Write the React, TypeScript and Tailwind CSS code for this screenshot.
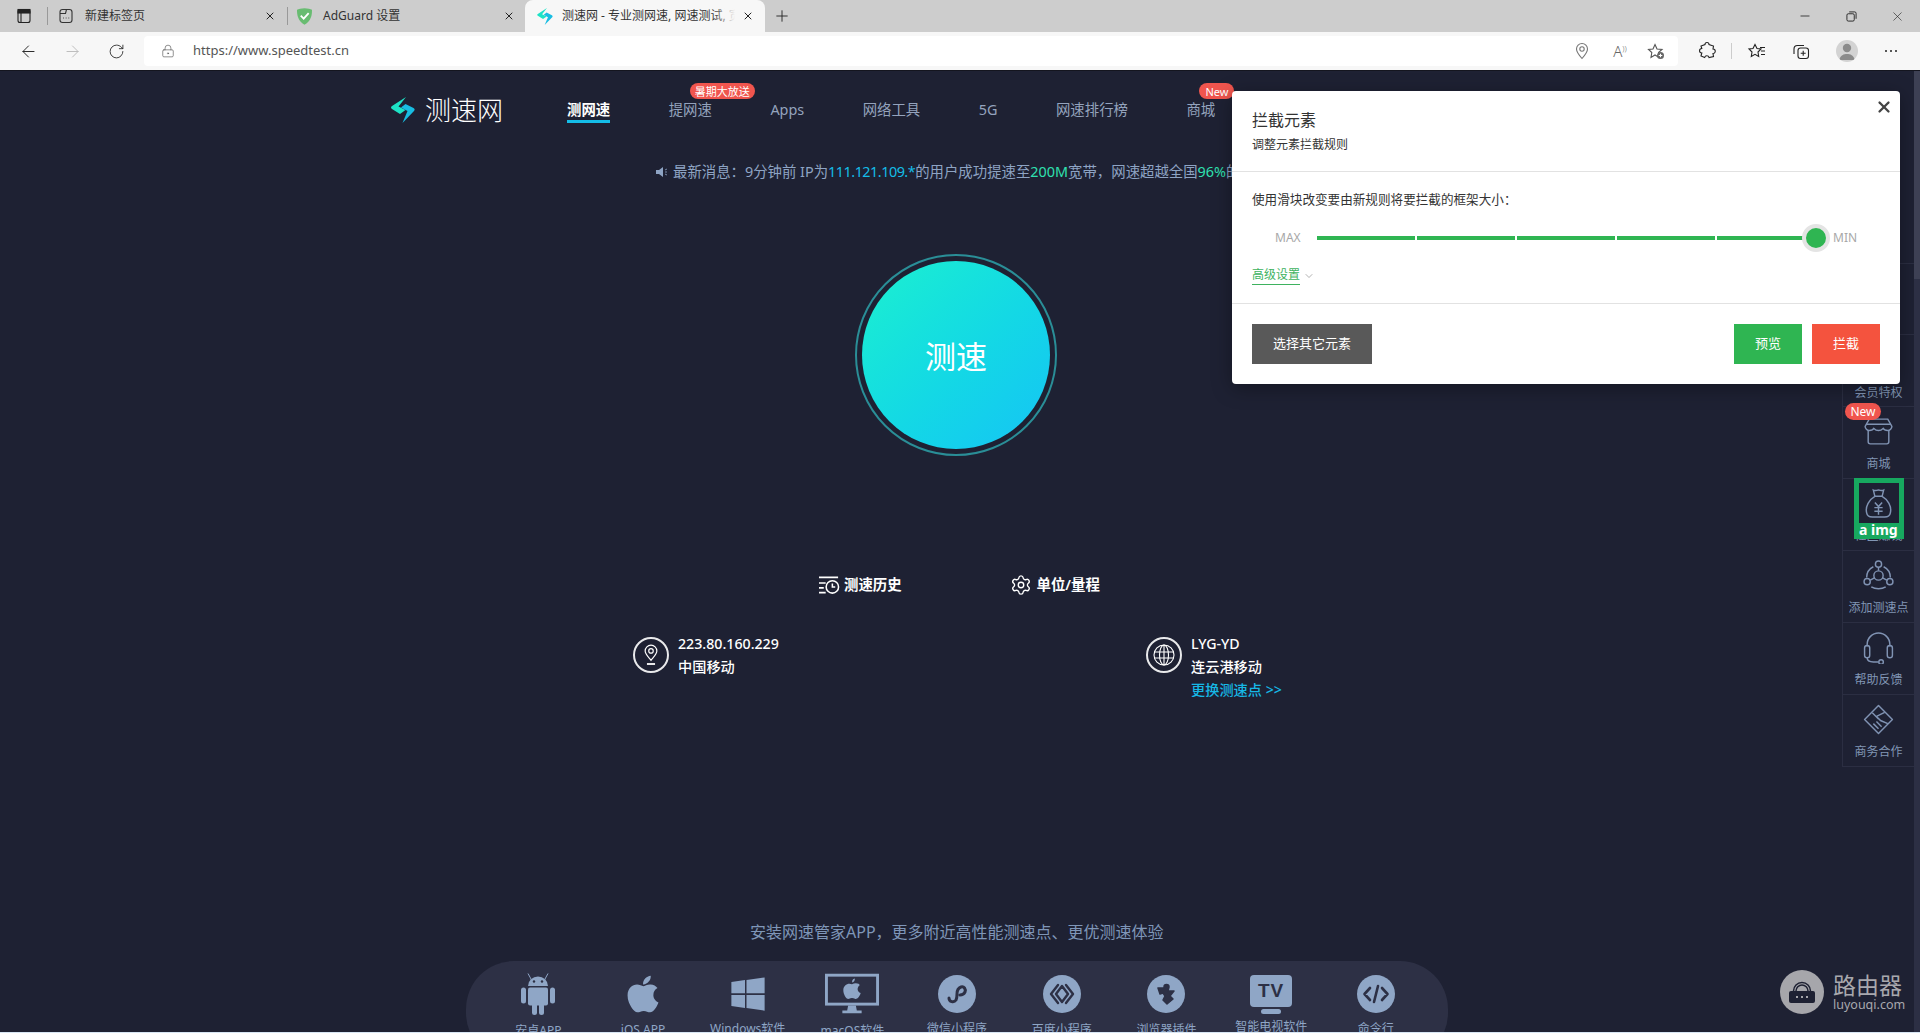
import { ArrowLeft, ArrowRight, ChevronDown, LockKeyhole, Minus, Plus, RotateCw, Settings, X } from "lucide-react";
import type { ReactNode } from "react";
import { FaApple, FaWindows } from "react-icons/fa";

const navItems = [
  { label: "测网速", active: true },
  { label: "提网速", badge: "暑期大放送", badgeClass: "left-[21px] w-[65px]" },
  { label: "Apps" },
  { label: "网络工具" },
  { label: "5G" },
  { label: "网速排行榜" },
  { label: "商城", badge: "New", badgeClass: "left-[13px] w-[35px]" },
];

function Swirl({ className }: { className: string }) {
  return (
    <svg viewBox="0 0 24 26" className={className}>
      <path d="M15 0 L1 9 Q-1 10.500 1 12 L9 17 L14.500 13 L7.500 9.500 Z" fill="#1de3c6" />
      <path d="M11.500 26 L23 14 Q24.500 12 22.500 11 L14.500 7 L10 10.500 L16.500 14 Z" fill="#18bde2" />
    </svg>
  );
}

function Shield() {
  return (
    <svg viewBox="0 0 18 20" className="h-[17px] w-[15px]">
      <path d="M9 0 C5 0 2 1 0 2 C0 9 1 15 9 20 C17 15 18 9 18 2 C16 1 13 0 9 0Z" fill="#68bc71" />
      <path d="M4.5 9 L8 12.5 L14 6" fill="none" stroke="#fff" strokeWidth="2.2" />
    </svg>
  );
}

function TabClose() {
  return <X size={12} strokeWidth={2} className="text-[#222]" />;
}

function ChromeIcon({ children, className = "" }: { children: ReactNode; className?: string }) {
  return (
    <svg viewBox="0 0 20 20" fill="none" stroke="currentColor" strokeWidth="1.1" className={`h-5 w-5 ${className}`}>
      {children}
    </svg>
  );
}

function TabBar() {
  return (
    <div className="flex h-8 items-stretch bg-[#cdcdcd] text-xs text-[#333]">
      <div className="flex w-[47px] items-center justify-center">
        <ChromeIcon className="text-[#222]">
          <rect x="4" y="3.5" width="12" height="13" rx="2" />
          <rect x="4" y="3.5" width="12" height="3.5" fill="currentColor" />
          <path d="M7 7v9" />
        </ChromeIcon>
      </div>
      <div className="my-[7px] w-px bg-[#999]" />
      <div className="flex w-[239px] items-center pl-[8px] pr-[11px]">
        <ChromeIcon className="text-[#333]">
          <rect x="4" y="3.5" width="12" height="13" rx="2.5" />
          <path d="M4 7.5h5.5l1-4" />
          <path d="M7 12h.8M9.7 12h.8M12.4 12h.8" />
        </ChromeIcon>
        <span className="ml-[9px] flex-1">新建标签页</span>
        <TabClose />
      </div>
      <div className="my-[7px] w-px bg-[#999]" />
      <div className="flex w-[237px] items-center pl-[9px] pr-[10px]">
        <Shield />
        <span className="ml-[11px] flex-1">AdGuard 设置</span>
        <TabClose />
      </div>
      <div className="flex w-[240px] items-center rounded-t-lg bg-[#f7f7f7] pl-[12px] pr-[11px]">
        <Swirl className="h-[17px] w-[16px] shrink-0" />
        <span className="relative ml-[9px] w-[173px] overflow-hidden whitespace-nowrap">
          测速网 - 专业测网速, 网速测试, 宽带提速
          <span className="absolute inset-y-0 right-0 w-[22px] bg-gradient-to-r from-transparent to-[#f7f7f7]" />
        </span>
        <span className="flex flex-1 justify-end">
          <TabClose />
        </span>
      </div>
      <div className="flex w-[34px] items-center justify-center">
        <Plus size={18} strokeWidth={1.2} className="text-[#222]" />
      </div>
      <div className="flex-1" />
      <div className="flex w-[46px] items-center justify-center">
        <Minus size={14} strokeWidth={1.4} className="text-[#222]" />
      </div>
      <div className="flex w-[46px] items-center justify-center">
        <svg viewBox="0 0 12 12" fill="none" stroke="#222" strokeWidth="1" className="h-[11px] w-[11px]">
          <rect x="1" y="3" width="8" height="8" rx="1.5" />
          <path d="M3.5 1h6a1.5 1.5 0 0 1 1.5 1.5v6" />
        </svg>
      </div>
      <div className="flex w-[46px] items-center justify-center">
        <X size={15} strokeWidth={1} className="text-[#222]" />
      </div>
    </div>
  );
}

function ToolBar() {
  return (
    <div className="flex h-[38px] items-center bg-[#f7f7f7] pl-[6px] text-[#444]">
      <div className="flex w-[44px] justify-center">
        <ArrowLeft size={19} strokeWidth={1.2} className="text-[#222]" />
      </div>
      <div className="flex w-[44px] justify-center">
        <ArrowRight size={19} strokeWidth={1.2} className="text-[#bbb]" />
      </div>
      <div className="flex w-[44px] justify-center">
        <RotateCw size={17} strokeWidth={1.2} className="text-[#222]" />
      </div>
      <div className="ml-[6px] flex h-[30px] w-[1534px] items-center rounded-sm bg-white pl-[17px]">
        <LockKeyhole size={14} strokeWidth={1.1} className="text-[#555]" />
        <span className="ml-[18px] flex-1 font-['Noto_Sans',sans-serif] text-[13px] text-[#555]">https://www.speedtest.cn</span>
        <ChromeIcon className="mr-[18px] text-[#777]">
          <path d="M10 17.5 C6 13 4.5 10.5 4.5 8 a5.5 5.5 0 0 1 11 0 C15.5 10.5 14 13 10 17.5Z" />
          <circle cx="10" cy="8" r="2.2" />
        </ChromeIcon>
        <div className="mr-[16px] flex h-5 w-5 items-center justify-center font-['Noto_Sans',sans-serif] text-[15px] font-light text-[#666]">
          A<span className="mb-[6px] text-[8px]">))</span>
        </div>
        <ChromeIcon className="mr-[12px] text-[#555]">
          <path d="M9 3.5 L11 8 L16 8.5 L12.5 11.5 L13 16.5 L9 14 L5 16.5 L5.8 11.5 L2.5 8.5 L7 8Z" />
          <circle cx="14.5" cy="14.5" r="3.5" fill="#666" stroke="none" />
          <path d="M14.5 12.7v3.6M12.7 14.5h3.6" stroke="#fff" />
        </ChromeIcon>
      </div>
      <div className="flex w-[53px] pl-[19px] text-[#222]">
        <ChromeIcon>
          <path d="M8 3.5 a2 2 0 0 1 4 0 L16.5 5 L16 8 a2.2 2.2 0 0 1 0 4.5 L16.5 15.5 L12 16.5 a2.2 2.2 0 0 0-4.3 0 L4 15 L4.8 12 a2.2 2.2 0 0 1 0-4.5 L4 5Z" />
        </ChromeIcon>
      </div>
      <div className="h-4 w-px bg-[#ccc]" />
      <div className="flex w-[50px] justify-center text-[#222]">
        <ChromeIcon>
          <path d="M8 3.5 L10 7.5 L14 8 L11 11 L11.7 15.5 L8 13.3 L4.3 15.5 L5 11 L2 8 L6 7.5Z" />
          <path d="M13 6.5h5M14 10h4M14 13.5h4" />
        </ChromeIcon>
      </div>
      <div className="flex w-[38px] justify-center text-[#222]">
        <ChromeIcon>
          <rect x="7" y="7" width="10.5" height="10.5" rx="2.5" />
          <path d="M12.2 9.7v5M9.7 12.2h5M13 4.5 H6.5 a3.5 3.5 0 0 0-3.5 3.5 v5" />
        </ChromeIcon>
      </div>
      <div className="ml-[16px] flex h-[22px] w-[22px] items-end justify-center overflow-hidden rounded-full bg-[#d3d3d3]">
        <svg viewBox="0 0 22 22" className="h-[22px] w-[22px]" fill="#8b8b8b">
          <circle cx="11" cy="8" r="4.2" />
          <path d="M3.5 20 C4 15 8 14 11 14 C14 14 18 15 18.5 20Z" />
        </svg>
      </div>
      <div className="ml-[27px] flex gap-[3px]">
        <span className="h-[2px] w-[2px] rounded-full bg-[#222]" />
        <span className="h-[2px] w-[2px] rounded-full bg-[#222]" />
        <span className="h-[2px] w-[2px] rounded-full bg-[#222]" />
      </div>
    </div>
  );
}

function Header() {
  return (
    <div className="flex h-[52px] pl-[390px]">
      <div className="flex w-[115px] items-end">
        <Swirl className="ml-[1px] h-[26px] w-[24px] shrink-0" />
        <span className="mb-[-4px] ml-[10px] whitespace-nowrap text-[26px] font-light leading-[34px] text-white">测速网</span>
      </div>
      <div className="ml-[62px] flex gap-[58.5px] text-[14.4px] text-[#94a3bd]">
        {navItems.map((item) => (
          <div
            key={item.label}
            className={`relative whitespace-nowrap pt-[29px] leading-[20px] ${item.active ? "border-b-[3px] border-[#14bde8] font-semibold text-white" : ""}`}
          >
            {item.label}
            {item.badge && (
              <span
                className={`absolute top-[12px] flex h-4 items-center justify-center rounded-full bg-[#f0554e] text-[11px] font-normal leading-none text-white ${item.badgeClass}`}
              >
                {item.badge}
              </span>
            )}
          </div>
        ))}
      </div>
    </div>
  );
}

function StartButton() {
  return (
    <div className="ml-[855px] mt-[72px] flex h-[202px] w-[202px] items-center justify-center rounded-full border-2 border-[#2a8e97]">
      <div className="flex h-[188px] w-[188px] items-center justify-center rounded-full bg-gradient-to-br from-[#1df0cf] to-[#17c3f5] pt-[2px] text-[31px] text-white">
        测速
      </div>
    </div>
  );
}

function ToolLinks() {
  return (
    <div className="mt-[117px] flex h-6 items-center gap-[108px] pl-[819px] text-[14.4px] font-semibold text-white">
      <div className="flex items-center gap-[4px]">
        <svg viewBox="0 0 22 20" fill="none" stroke="#fff" strokeWidth="1.6" className="h-[20px] w-[21px]">
          <path d="M0 2h20M0 8h7M0 13h5M0 18h7" />
          <circle cx="14" cy="12" r="6.5" />
          <path d="M14 8.5V12h3" />
        </svg>
        测速历史
      </div>
      <div className="flex items-center gap-[5px]">
        <Settings size={22} strokeWidth={1.5} className="text-white" />
        单位/量程
      </div>
    </div>
  );
}

function InfoBlock({ icon, lines, link }: { icon: ReactNode; lines: string[]; link?: string }) {
  return (
    <div className="flex">
      <div className="flex h-9 w-9 shrink-0 items-center justify-center rounded-full border-2 border-white/90">{icon}</div>
      <div className="-mt-[5px] ml-[9px] whitespace-nowrap text-[14.2px] font-medium leading-[23px] text-white">
        {lines.map((line) => (
          <div key={line}>{line}</div>
        ))}
        {link && <div className="text-[#16b8e6]">{link}</div>}
      </div>
    </div>
  );
}

function InfoRow() {
  return (
    <div className="mt-[40px] flex h-[65px] pl-[633px]">
      <div className="w-[513px]">
        <InfoBlock
          lines={["223.80.160.229", "中国移动"]}
          icon={
            <svg viewBox="0 0 20 24" fill="none" stroke="#fff" strokeWidth="1.3" className="h-[22px] w-[18px]">
              <path d="M10 18 C6 13 3.5 10.5 3.5 7.5 a6.5 6.5 0 0 1 13 0 C16.5 10.5 14 13 10 18Z" />
              <circle cx="10" cy="7.5" r="2.5" />
              <path d="M5.5 22h9" strokeWidth="2" />
            </svg>
          }
        />
      </div>
      <InfoBlock
        lines={["LYG-YD", "连云港移动"]}
        link="更换测速点 >>"
        icon={
          <svg viewBox="0 0 24 24" fill="none" stroke="#fff" strokeWidth="1.1" className="h-[24px] w-[24px]">
            <circle cx="12" cy="12" r="10" />
            <ellipse cx="12" cy="12" rx="4.5" ry="10" />
            <path d="M2.5 9h19M2.5 15h19M12 2v20" />
          </svg>
        }
      />
    </div>
  );
}

function CircleGlyph({ children }: { children: ReactNode }) {
  return (
    <svg viewBox="0 0 38 38" className="h-[38px] w-[38px]">
      <circle cx="19" cy="19" r="19" fill="#8fa6c6" />
      <g fill="none" stroke="#2d3045" strokeWidth="3" strokeLinecap="round" strokeLinejoin="round">
        {children}
      </g>
    </svg>
  );
}

const apps: { label: string; labelClass: string; icon: ReactNode }[] = [
  {
    label: "安卓APP",
    labelClass: "mt-[7px]",
    icon: (
      <svg viewBox="0 0 36 42" className="h-[42px] w-[36px]" fill="#8fa6c6">
        <path d="M8 13 a10 9.500 0 0 1 20 0Z" />
        <path d="M11 6 L8 0.500 M25 6 L28 0.500" stroke="#8fa6c6" strokeWidth="1" />
        <circle cx="14" cy="8.500" r="1.200" fill="#2d3045" />
        <circle cx="22" cy="8.500" r="1.200" fill="#2d3045" />
        <rect x="8" y="14.500" width="20" height="18" rx="2" />
        <rect x="1" y="14.500" width="5" height="16" rx="2.500" />
        <rect x="30" y="14.500" width="5" height="16" rx="2.500" />
        <rect x="12" y="30" width="5" height="12" rx="2.500" />
        <rect x="19" y="30" width="5" height="12" rx="2.500" />
      </svg>
    ),
  },
  { label: "iOS APP", labelClass: "mt-[6px]", icon: <FaApple className="h-[42px] w-[38px]" /> },
  { label: "Windows软件", labelClass: "mt-[5px]", icon: <FaWindows className="h-[38px] w-[36px]" /> },
  {
    label: "macOS软件",
    labelClass: "mt-[7px]",
    icon: (
      <svg viewBox="0 0 56 42" className="h-[42px] w-[54px]">
        <rect x="1.5" y="1.5" width="53" height="30" fill="none" stroke="#8fa6c6" strokeWidth="3" />
        <path d="M28 11 C31 9 36 10 36 12 C33 14 33 19 37 20 C36 24 33 27 31 26 C29 25 27 25 25 26 C22 27 19 21 19 17 C19 12 24 9 28 11Z M28 9 C28 6 30 5 31 5 C31 7 30 9 28 9Z" fill="#8fa6c6" />
        <path d="M24 33h8l1 5h5v3H18v-3h5Z" fill="#8fa6c6" />
      </svg>
    ),
  },
  {
    label: "微信小程序",
    labelClass: "mt-[5px]",
    icon: (
      <CircleGlyph>
        <path d="M11 23 C11 27 16 28 18 25 C19 23 19 21 19 19 C19 16 20 13 23 12 C26 11 28 14 27 17 C26 19 24 20 22 20" />
      </CircleGlyph>
    ),
  },
  {
    label: "百度小程序",
    labelClass: "mt-[6px]",
    icon: (
      <CircleGlyph>
        <path d="M15 10 L8 19 L15 28 M23 10 L30 19 L23 28 M19 11 L13 19 L19 27 L25 19Z" strokeWidth="2.4" />
      </CircleGlyph>
    ),
  },
  {
    label: "浏览器插件",
    labelClass: "mt-[6px]",
    icon: (
      <CircleGlyph>
        <path d="M11 13h6v-1a2.500 2.500 0 0 1 5 0l-1 4h6l-4 5 3 3-6 5-4-4 2-4-2-3-3 1Z" fill="#2d3045" strokeWidth="1.500" />
      </CircleGlyph>
    ),
  },
  {
    label: "智能电视软件",
    labelClass: "mt-[3px]",
    icon: (
      <div className="flex flex-col items-center gap-[2px]">
        <div className="flex h-[32px] w-[42px] items-center justify-center rounded-[4px] bg-[#8fa6c6] font-['Liberation_Sans',sans-serif] text-[19px] font-bold tracking-[1px] text-[#2d3045]">
          TV
        </div>
        <div className="h-[5px] w-[20px] rounded-sm bg-[#8fa6c6]" />
      </div>
    ),
  },
  {
    label: "命令行",
    labelClass: "mt-[5px]",
    icon: (
      <CircleGlyph>
        <path d="M13 13 L7.5 19 L13 25 M25 13 L30.5 19 L25 25 M21 11 L17 27" strokeWidth="2.6" />
      </CircleGlyph>
    ),
  },
];

function AppPill() {
  return (
    <div className="ml-[466px] mt-[19px] flex h-[100px] w-[982px] rounded-[48px] bg-[#2d3045] pl-[20px] pt-[11px] text-xs text-[#8fa6c6]">
      {apps.map((app) => (
        <div key={app.label} className="flex w-[104.7px] shrink-0 flex-col items-center whitespace-nowrap">
          <div className="flex h-[44px] items-center justify-center">{app.icon}</div>
          <div className={`leading-4 ${app.labelClass}`}>{app.label}</div>
        </div>
      ))}
    </div>
  );
}

const sideItems: { label: string; badge?: boolean; icon: ReactNode }[] = [
  {
    label: "商城",
    badge: true,
    icon: (
      <>
        <path d="M7 4h18l4 7c0 2-2 4-4 4-2 0-4-1-4.500-2-1 1-3 2-4.500 2s-3.500-1-4.500-2c-.5 1-2.500 2-4.500 2s-4-2-4-4Z" />
        <path d="M6 15v11a2 2 0 0 0 2 2h16a2 2 0 0 0 2-2V15M4 9h24" />
      </>
    ),
  },
  {
    label: "社区赚钱",
    icon: (
      <>
        <path d="M11 3 C13 4 14 3 16 3 C18 3 19 4 21 3 L19.500 9 C25 12 29 19 27.500 25 C27 28 24 29 22 29 H10 C8 29 5 28 4.500 25 C3 19 7 12 12.500 9Z" />
        <path d="M12.500 9h7M12.500 15l3.500 4 3.500-4M12 20h8M12 23.500h8M16 19v8" />
      </>
    ),
  },
  {
    label: "添加测速点",
    icon: (
      <>
        <circle cx="16" cy="5" r="3" />
        <circle cx="5" cy="22" r="3" />
        <circle cx="27" cy="22" r="3" />
        <circle cx="16" cy="16" r="4.500" />
        <path d="M16 8v3.500M8 20.500l4.500-2.500M24 20.500l-4.500-2.500M11 7.500C7 9.500 4.500 13 4.500 18M21 7.500c4 2 6.500 5.500 6.500 10.500M9 27c4 2.500 10 2.500 14 0" />
      </>
    ),
  },
  {
    label: "帮助反馈",
    icon: (
      <>
        <path d="M5 15v-2a11 11 0 0 1 22 0v2" />
        <rect x="2.500" y="14" width="5" height="12" rx="2.500" />
        <rect x="24.500" y="14" width="5" height="12" rx="2.500" />
        <path d="M5 26c0 3 3 4 6 4h5" />
        <circle cx="18.500" cy="30" r="2.200" />
      </>
    ),
  },
  {
    label: "商务合作",
    icon: (
      <>
        <path d="M16 2.500 L29.500 16 L16 29.500 L2.500 16 Z" strokeLinejoin="round" />
        <path d="M10 9.500 L16 15.500 M22 9 L14 13 L18 17 L25 20 M11 20 L16 25 M14 18 L19 23" />
      </>
    ),
  },
];

function SideRail() {
  return (
    <div className="absolute right-0 top-[192px] w-[72px] border-l border-[#2b2e42] text-xs text-[#8196b5]">
      <div className="h-[72px] border-y border-[#2b2e42]" />
      <div className="flex h-[72px] items-end justify-center border-b border-[#2b2e42] pb-[5px]">会员特权</div>
      {sideItems.map((item) => (
        <div key={item.label} className="relative flex h-[72px] flex-col items-center border-b border-[#2b2e42] pt-[8px]">
          <svg viewBox="0 0 32 32" fill="none" stroke="#8093b3" strokeWidth="1.4" className="h-[33px] w-[33px]">
            {item.icon}
          </svg>
          <span className="mt-[8px] whitespace-nowrap leading-4">{item.label}</span>
          {item.badge && (
            <span className="absolute left-[2px] top-[-4px] flex h-[17px] w-[36px] items-center justify-center rounded-full bg-[#f0554e] text-white">
              New
            </span>
          )}
        </div>
      ))}
      <div className="absolute left-[11px] top-[215px] h-[61px] w-[50px] border-x-[5px] border-b-[16px] border-t-[5px] border-[#17a85f]">
        <span className="absolute left-[0px] top-[38px] whitespace-nowrap font-['Noto_Sans',sans-serif] text-[14px] font-bold leading-[18px] text-white">
          a img
        </span>
      </div>
    </div>
  );
}

function BlockModal() {
  return (
    <div className="absolute right-[14px] top-[20px] z-10 h-[293px] w-[668px] rounded-sm bg-white text-[#333] shadow-[0_4px_20px_rgba(0,0,0,0.35)]">
      <button className="absolute right-[7px] top-[7px] text-[#444]">
        <X size={18} strokeWidth={3} />
      </button>
      <div className="h-[81px] border-b border-[#e2e2e2] pl-5 pt-[17px]">
        <div className="text-base leading-6">拦截元素</div>
        <div className="mt-[4px] text-xs leading-[18px]">调整元素拦截规则</div>
      </div>
      <div className="h-[131px] px-5 pt-[19px]">
        <div className="text-[12.6px] leading-[18px]">{"使用滑块改变要由新规则将要拦截的框架大小\uFF1A"}</div>
        <div className="mt-[15px] flex h-7 items-center pl-[23px] text-xs text-[#a8a8a8]">
          <span className="w-[42px]">MAX</span>
          <div className="relative flex w-[498px] gap-[2px]">
            <div className="h-1 w-[98px] bg-[#2fb552]" />
            <div className="h-1 w-[98px] bg-[#2fb552]" />
            <div className="h-1 w-[98px] bg-[#2fb552]" />
            <div className="h-1 w-[98px] bg-[#2fb552]" />
            <div className="h-1 w-[98px] bg-[#2fb552]" />
            <div className="absolute -right-[15px] -top-[12px] h-7 w-7 rounded-full border-4 border-[#e4e4e4] bg-[#2fb552]" />
          </div>
          <span className="ml-[18px]">MIN</span>
        </div>
        <div className="mt-[14px] flex items-center text-xs leading-[18px] text-[#3eb25f]">
          <span className="border-b border-[#3eb25f]">高级设置</span>
          <ChevronDown size={12} strokeWidth={1.3} className="ml-[3px] text-[#888]" />
        </div>
      </div>
      <div className="flex justify-between border-t border-[#e2e2e2] px-5 pt-5 text-[13px] text-white">
        <div className="flex h-10 w-[120px] items-center justify-center bg-[#595959]">选择其它元素</div>
        <div className="flex gap-[10px]">
          <div className="flex h-10 w-[68px] items-center justify-center bg-[#2fb552]">预览</div>
          <div className="flex h-10 w-[68px] items-center justify-center bg-[#f4533e]">拦截</div>
        </div>
      </div>
    </div>
  );
}

function Watermark() {
  return (
    <div className="absolute bottom-[18px] right-[11px] flex items-center text-[#a8a8ae]">
      <div className="flex h-[44px] w-[44px] items-center justify-center rounded-full bg-[#a6a6ab]">
        <svg viewBox="0 0 28 24" className="h-[24px] w-[28px]">
          <path d="M8 11a6 6 0 0 1 12 0M5.500 11a8.500 8.500 0 0 1 17 0" fill="none" stroke="#1e2133" strokeWidth="1.5" />
          <rect x="1" y="11" width="26" height="12" rx="2" fill="#1e2133" />
          <path d="M8 17h2M13 17h2M18 17h2" stroke="#a6a6ab" strokeWidth="2" />
        </svg>
      </div>
      <div className="ml-[9px] w-[70px]">
        <div className="text-[23px] leading-[26px]">路由器</div>
        <div className="font-['Noto_Sans',sans-serif] text-[12.5px] leading-[14px]">luyouqi.com</div>
      </div>
    </div>
  );
}

function App() {
  return (
    <div className="h-[1033px] w-[1920px] overflow-hidden bg-[#1e2133] font-['Noto_Sans','Noto_Sans_CJK_SC',sans-serif]">
      <TabBar />
      <ToolBar />
      <div className="flex h-[962px] border-t border-[#14151f]">
        <div className="relative w-[1914px] overflow-hidden">
          <Header />
          <div className="mt-[39px] flex h-5 items-center whitespace-pre pl-[655px] text-[14.4px] leading-5 text-[#8ea4c4]">
            <svg viewBox="0 0 14 14" className="mr-[4px] h-[14px] w-[14px]" fill="#8ea4c4">
              <path d="M1 5h3l4-3v10L4 9H1Z" />
              <path d="M10 5l2-1M10 7h2M10 9l2 1" stroke="#8ea4c4" strokeWidth="0.8" />
            </svg>
            <span>{"最新消息\uFF1A9分钟前 IP为"}</span>
            <span className="tracking-[-0.5px] text-[#14bde8]">111.121.109.*</span>
            <span>的用户成功提速至</span>
            <span className="text-[#2fe0b0]">200M</span>
            <span>{"宽带\uFF0C网速超越全国"}</span>
            <span className="text-[#2fe0b0]">96%</span>
            <span>的用户</span>
          </div>
          <StartButton />
          <ToolLinks />
          <InfoRow />
          <div className="mt-[220px] h-5 pl-[750px] text-base leading-5 text-[#7f96b8]">{"安装网速管家APP\uFF0C更多附近高性能测速点、更优测速体验"}</div>
          <AppPill />
          <SideRail />
          <Watermark />
          <BlockModal />
        </div>
        <div className="w-[6px] bg-[#2c2f44]">
          <div className="h-[208px] bg-[#3d4054]" />
        </div>
      </div>
      <div className="h-px bg-[#d8e6f4]" />
    </div>
  );
}

export default App;
